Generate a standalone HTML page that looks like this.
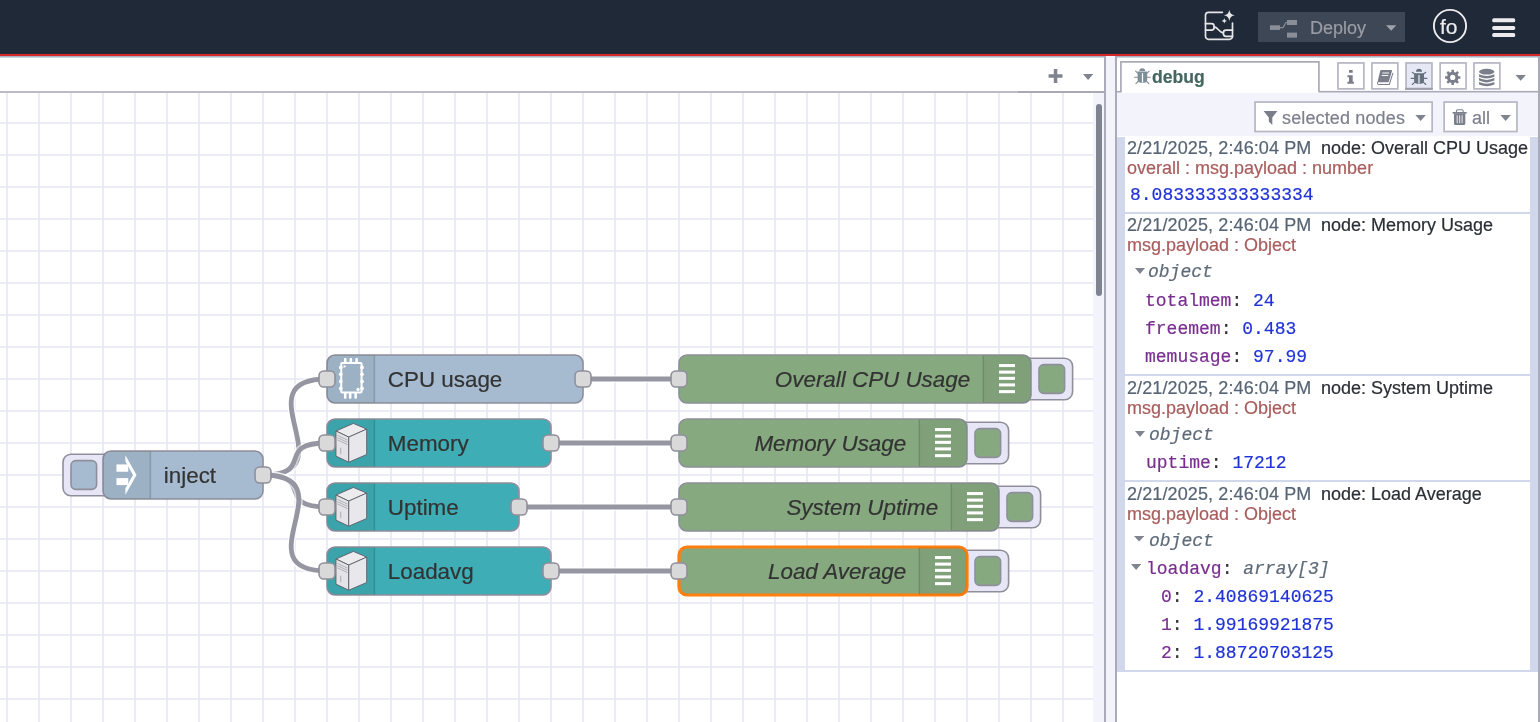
<!DOCTYPE html>
<html><head><meta charset="utf-8"><title>Node-RED</title>
<style>
html,body{margin:0;padding:0;width:1540px;height:722px;overflow:hidden;background:#fff;font-family:"Liberation Sans", sans-serif;}
body>div,body>svg{will-change:transform;}
body>div{-webkit-text-stroke:0.2px currentColor;}
</style></head><body>
<div style="position:absolute;left:0;top:0;width:1540px;height:54px;background:#1f2937"></div><div style="position:absolute;left:0;top:54px;width:1540px;height:2px;background:#d62828"></div><svg style="position:absolute;left:1195px;top:5px" width="50" height="45" viewBox="1195 5 50 45"><g fill="none" stroke="#e6e6e8" stroke-width="1.7" stroke-linecap="round"><path d="M1222.4 12.3 H1208.5 a3 3 0 0 0 -3 3 V36.3 a3 3 0 0 0 3 3 H1229.5 a3 3 0 0 0 3 -3 V23"/><path d="M1205.5 23.7 H1211.5 a2.6 2.6 0 0 1 2.6 2.6 v1.2 a2.6 2.6 0 0 1 -2.6 2.6 H1205.5"/><path d="M1232.5 30.2 H1226 a2.6 2.6 0 0 0 -2.6 2.6 v1 a2.6 2.6 0 0 0 2.6 2.6 H1232.5"/><path d="M1214.1 26.9 C1218 26.9 1219 32.8 1223.4 32.8"/></g><path d="M1229.3 9.7 Q1229.9 14.7 1234.9 15.3 Q1229.9 15.9 1229.3 20.9 Q1228.7 15.9 1223.7 15.3 Q1228.7 14.7 1229.3 9.7Z" fill="#e6e6e8"/><path d="M1224.3 18.3 Q1224.6 20.6 1226.9 20.9 Q1224.6 21.2 1224.3 23.5 Q1224 21.2 1221.7 20.9 Q1224 20.6 1224.3 18.3Z" fill="#e6e6e8"/></svg><div style="position:absolute;left:1258px;top:12px;width:147px;height:30px;background:#3d4756"></div><svg style="position:absolute;left:1258px;top:12px" width="147" height="30" viewBox="1258 12 147 30"><rect x="1270" y="25.3" width="10" height="4.6" fill="#8a8e98"/><rect x="1287" y="20" width="10" height="5" fill="#8a8e98"/><rect x="1287" y="32.6" width="10" height="5" fill="#8a8e98"/><path d="M1280 27.6 L1283 27.6 L1286 22.5 L1287 22.5" stroke="#8a8e98" stroke-width="1.2" fill="none"/><polygon points="1386,25.3 1396.3,25.3 1391.15,30.8" fill="#a0a3ab"/></svg><div style="position:absolute;left:1310.3px;top:17.66px;font-family:'Liberation Sans', sans-serif;font-size:18px;line-height:20px;color:#9a9da5;white-space:pre;">Deploy</div><svg style="position:absolute;left:1430px;top:6px" width="40" height="40"><circle cx="20" cy="20" r="16.1" fill="none" stroke="#ececee" stroke-width="1.9"/></svg><div style="position:absolute;left:1440.2px;top:16.62px;font-family:'Liberation Sans', sans-serif;font-size:21px;line-height:20px;color:#ececee;white-space:pre;">fo</div><svg style="position:absolute;left:1490px;top:15px" width="28" height="26"><rect x="2.2" y="3.3" width="23" height="4" rx="1.6" fill="#ececee"/><rect x="2.2" y="10.9" width="23" height="4" rx="1.6" fill="#ececee"/><rect x="2.2" y="18.1" width="23" height="4" rx="1.6" fill="#ececee"/></svg>
<div style="position:absolute;left:0;top:56px;width:1104px;height:1px;background:#a9b3bf"></div><div style="position:absolute;left:0;top:57px;width:1104px;height:1px;background:#cdd3db"></div><div style="position:absolute;left:0;top:58px;width:1104px;height:33px;background:#fff"></div><div style="position:absolute;left:0;top:91px;width:1018px;height:2px;background:#bbbbc7"></div><div style="position:absolute;left:1018px;top:91px;width:86px;height:2px;background:#a8a8b6"></div><svg style="position:absolute;left:1046px;top:67px" width="20" height="18"><path d="M9.55 2 V16 M2.6 9 H16.5" stroke="#80848f" stroke-width="3.5" stroke-linecap="butt"/></svg><svg style="position:absolute;left:1082.6px;top:74px" width="10.2" height="6"><polygon points="0,0 10.2,0 5.1,6" fill="#80848f"/></svg><div style="position:absolute;left:1093px;top:93px;width:11px;height:629px;background:#f3f3fb"></div><div style="position:absolute;left:1096px;top:104px;width:6px;height:192px;background:#7f8491;border-radius:3px"></div><div style="position:absolute;left:1104px;top:56px;width:2px;height:666px;background:#aaaab8"></div><div style="position:absolute;left:1106px;top:56px;width:9px;height:666px;background:#f3f3fb"></div><div style="position:absolute;left:1115px;top:56px;width:2px;height:666px;background:#aaaab8"></div>
<div style="position:absolute;left:0;top:93px;width:1093px;height:629px;background:#fff;overflow:hidden"><svg width="1093" height="629" style="position:absolute;left:0;top:0"><g transform="translate(7.0,-66.0) scale(1.6)" font-family="Liberation Sans, sans-serif"><g stroke="#e6e6f5" stroke-width="1" shape-rendering="auto"><line x1="-20" y1="0" x2="-20" y2="500"/><line x1="0" y1="0" x2="0" y2="500"/><line x1="20" y1="0" x2="20" y2="500"/><line x1="40" y1="0" x2="40" y2="500"/><line x1="60" y1="0" x2="60" y2="500"/><line x1="80" y1="0" x2="80" y2="500"/><line x1="100" y1="0" x2="100" y2="500"/><line x1="120" y1="0" x2="120" y2="500"/><line x1="140" y1="0" x2="140" y2="500"/><line x1="160" y1="0" x2="160" y2="500"/><line x1="180" y1="0" x2="180" y2="500"/><line x1="200" y1="0" x2="200" y2="500"/><line x1="220" y1="0" x2="220" y2="500"/><line x1="240" y1="0" x2="240" y2="500"/><line x1="260" y1="0" x2="260" y2="500"/><line x1="280" y1="0" x2="280" y2="500"/><line x1="300" y1="0" x2="300" y2="500"/><line x1="320" y1="0" x2="320" y2="500"/><line x1="340" y1="0" x2="340" y2="500"/><line x1="360" y1="0" x2="360" y2="500"/><line x1="380" y1="0" x2="380" y2="500"/><line x1="400" y1="0" x2="400" y2="500"/><line x1="420" y1="0" x2="420" y2="500"/><line x1="440" y1="0" x2="440" y2="500"/><line x1="460" y1="0" x2="460" y2="500"/><line x1="480" y1="0" x2="480" y2="500"/><line x1="500" y1="0" x2="500" y2="500"/><line x1="520" y1="0" x2="520" y2="500"/><line x1="540" y1="0" x2="540" y2="500"/><line x1="560" y1="0" x2="560" y2="500"/><line x1="580" y1="0" x2="580" y2="500"/><line x1="600" y1="0" x2="600" y2="500"/><line x1="620" y1="0" x2="620" y2="500"/><line x1="640" y1="0" x2="640" y2="500"/><line x1="660" y1="0" x2="660" y2="500"/><line x1="680" y1="0" x2="680" y2="500"/><line x1="700" y1="0" x2="700" y2="500"/><line x1="720" y1="0" x2="720" y2="500"/><line x1="740" y1="0" x2="740" y2="500"/><line x1="760" y1="0" x2="760" y2="500"/><line x1="780" y1="0" x2="780" y2="500"/><line x1="-10" y1="40" x2="700" y2="40"/><line x1="-10" y1="60" x2="700" y2="60"/><line x1="-10" y1="80" x2="700" y2="80"/><line x1="-10" y1="100" x2="700" y2="100"/><line x1="-10" y1="120" x2="700" y2="120"/><line x1="-10" y1="140" x2="700" y2="140"/><line x1="-10" y1="160" x2="700" y2="160"/><line x1="-10" y1="180" x2="700" y2="180"/><line x1="-10" y1="200" x2="700" y2="200"/><line x1="-10" y1="220" x2="700" y2="220"/><line x1="-10" y1="240" x2="700" y2="240"/><line x1="-10" y1="260" x2="700" y2="260"/><line x1="-10" y1="280" x2="700" y2="280"/><line x1="-10" y1="300" x2="700" y2="300"/><line x1="-10" y1="320" x2="700" y2="320"/><line x1="-10" y1="340" x2="700" y2="340"/><line x1="-10" y1="360" x2="700" y2="360"/><line x1="-10" y1="380" x2="700" y2="380"/><line x1="-10" y1="400" x2="700" y2="400"/><line x1="-10" y1="420" x2="700" y2="420"/><line x1="-10" y1="440" x2="700" y2="440"/><line x1="-10" y1="460" x2="700" y2="460"/><line x1="-10" y1="480" x2="700" y2="480"/></g><path d="M 160.0 280 C 214.08326913195984 280 145.91673086804016 220 200.0 220" fill="none" stroke="#fff" stroke-width="5" stroke-opacity="0.6"/><path d="M 160.0 280 C 214.08326913195984 280 145.91673086804016 220 200.0 220" fill="none" stroke="#9696a2" stroke-width="3"/><path d="M 160.0 280 C 193.54101966249686 280 166.45898033750314 260 200.0 260" fill="none" stroke="#fff" stroke-width="5" stroke-opacity="0.6"/><path d="M 160.0 280 C 193.54101966249686 280 166.45898033750314 260 200.0 260" fill="none" stroke="#9696a2" stroke-width="3"/><path d="M 160.0 280 C 193.54101966249686 280 166.45898033750314 300 200.0 300" fill="none" stroke="#fff" stroke-width="5" stroke-opacity="0.6"/><path d="M 160.0 280 C 193.54101966249686 280 166.45898033750314 300 200.0 300" fill="none" stroke="#9696a2" stroke-width="3"/><path d="M 160.0 280 C 214.08326913195984 280 145.91673086804016 340 200.0 340" fill="none" stroke="#fff" stroke-width="5" stroke-opacity="0.6"/><path d="M 160.0 280 C 214.08326913195984 280 145.91673086804016 340 200.0 340" fill="none" stroke="#9696a2" stroke-width="3"/><path d="M 360.0 220 C 405.0 220 375.0 220 420.0 220" fill="none" stroke="#fff" stroke-width="5" stroke-opacity="0.6"/><path d="M 360.0 220 C 405.0 220 375.0 220 420.0 220" fill="none" stroke="#9696a2" stroke-width="3"/><path d="M 340.0 260 C 400.0 260 360.0 260 420.0 260" fill="none" stroke="#fff" stroke-width="5" stroke-opacity="0.6"/><path d="M 340.0 260 C 400.0 260 360.0 260 420.0 260" fill="none" stroke="#9696a2" stroke-width="3"/><path d="M 320.0 300 C 395.0 300 345.0 300 420.0 300" fill="none" stroke="#fff" stroke-width="5" stroke-opacity="0.6"/><path d="M 320.0 300 C 395.0 300 345.0 300 420.0 300" fill="none" stroke="#9696a2" stroke-width="3"/><path d="M 340.0 340 C 400.0 340 360.0 340 420.0 340" fill="none" stroke="#fff" stroke-width="5" stroke-opacity="0.6"/><path d="M 340.0 340 C 400.0 340 360.0 340 420.0 340" fill="none" stroke="#9696a2" stroke-width="3"/><g transform="translate(60.0,265.0)"><g transform="translate(-25,2)"><rect width="32" height="26" rx="5" ry="5" fill="#e6e6f6" stroke="#8f8f9b" stroke-width="1"/><rect x="5" y="4" width="16" height="18" rx="3" ry="3" fill="#a6bbcf" stroke="#8f8f9b" stroke-width="1"/></g><rect width="100" height="30" rx="5" ry="5" fill="#a6bbcf" stroke="#8f8f9b" stroke-width="1"/><path d="M5 0 h25 v30 h-25 a5 5 0 0 1 -5 -5 v-20 a5 5 0 0 1 5 -5z" fill="#000" fill-opacity="0.05"/><path d="M29.6 0.5 l0 29" stroke="#000" stroke-opacity="0.13" stroke-width="1"/><g><polygon points="13.99,2.61 20.95,14.96 13.99,27.3 13.99,23.42 18.76,14.96 13.99,6.49" fill="#fff"/><rect x="8.41" y="8.39" width="7.37" height="4.58" fill="#fff"/><rect x="8.41" y="16.94" width="7.37" height="4.39" fill="#fff"/></g><text x="38" y="15" dy=".35em" text-anchor="start" style="" font-size="14" fill="#333" stroke="#333" stroke-width="0.13">inject</text><rect x="95" y="10" width="10" height="10" rx="3" ry="3" fill="#d9d9d9" stroke="#8f8f9b" stroke-width="1"/></g><g transform="translate(200.0,205.0)"><rect width="160" height="30" rx="5" ry="5" fill="#a6bbcf" stroke="#8f8f9b" stroke-width="1"/><path d="M5 0 h25 v30 h-25 a5 5 0 0 1 -5 -5 v-20 a5 5 0 0 1 5 -5z" fill="#000" fill-opacity="0.05"/><path d="M29.6 0.5 l0 29" stroke="#000" stroke-opacity="0.13" stroke-width="1"/><g><g fill="none" stroke="#fff" stroke-width="1.25"><rect x="8.9" y="5.0" width="12.7" height="18.5" rx="0.5"/></g><g fill="#fff"><circle cx="8.6" cy="7.75" r="1.15"/><circle cx="21.9" cy="7.75" r="1.15"/><circle cx="8.6" cy="12.1" r="1.15"/><circle cx="21.9" cy="12.1" r="1.15"/><circle cx="8.6" cy="16.5" r="1.15"/><circle cx="21.9" cy="16.5" r="1.15"/><circle cx="8.6" cy="20.9" r="1.15"/><circle cx="21.9" cy="20.9" r="1.15"/><rect x="10.6" y="1.9" width="1.6" height="3.2" rx="0.5"/><rect x="14.1" y="1.9" width="1.6" height="3.2" rx="0.5"/><rect x="17.7" y="1.9" width="1.6" height="3.2" rx="0.5"/><rect x="10.6" y="23.5" width="1.6" height="3.8" rx="0.5"/><rect x="13.7" y="23.5" width="1.6" height="3.8" rx="0.5"/><rect x="17.099999999999998" y="23.5" width="1.6" height="3.8" rx="0.5"/><polygon points="10.4,6.2 12.2,7.1 10.4,8.2"/><circle cx="19.4" cy="21.5" r="1.0"/></g></g><text x="38" y="15" dy=".35em" text-anchor="start" style="" font-size="14" fill="#333" stroke="#333" stroke-width="0.13">CPU usage</text><rect x="-5" y="10" width="10" height="10" rx="3" ry="3" fill="#d9d9d9" stroke="#8f8f9b" stroke-width="1"/><rect x="155" y="10" width="10" height="10" rx="3" ry="3" fill="#d9d9d9" stroke="#8f8f9b" stroke-width="1"/></g><g transform="translate(200.0,245.0)"><rect width="140" height="30" rx="5" ry="5" fill="#3fadb5" stroke="#8f8f9b" stroke-width="1"/><path d="M5 0 h25 v30 h-25 a5 5 0 0 1 -5 -5 v-20 a5 5 0 0 1 5 -5z" fill="#000" fill-opacity="0.05"/><path d="M29.6 0.5 l0 29" stroke="#000" stroke-opacity="0.13" stroke-width="1"/><g><g stroke="#5b5b66" stroke-width="0.55" stroke-linejoin="round"><polygon points="5.6,7.5 16.5,2.75 24.8,6.3 13.6,11.3" fill="#ececef"/><polygon points="5.6,7.5 13.6,11.3 13.6,27 5.6,23.2" fill="#e4e4e8"/><polygon points="13.6,11.3 24.8,6.3 24.8,22.2 13.6,27" fill="#e8e8ec"/></g><path d="M6.5 10.2 L12.8 13.2 M6.5 11.6 L12.8 14.6 M6.5 13 L12.8 16" stroke="#9a9aa3" stroke-width="0.45"/><path d="M8.6 18 L8.6 22" stroke="#9a9aa3" stroke-width="0.5"/></g><text x="38" y="15" dy=".35em" text-anchor="start" style="" font-size="14" fill="#333" stroke="#333" stroke-width="0.13">Memory</text><rect x="-5" y="10" width="10" height="10" rx="3" ry="3" fill="#d9d9d9" stroke="#8f8f9b" stroke-width="1"/><rect x="135" y="10" width="10" height="10" rx="3" ry="3" fill="#d9d9d9" stroke="#8f8f9b" stroke-width="1"/></g><g transform="translate(200.0,285.0)"><rect width="120" height="30" rx="5" ry="5" fill="#3fadb5" stroke="#8f8f9b" stroke-width="1"/><path d="M5 0 h25 v30 h-25 a5 5 0 0 1 -5 -5 v-20 a5 5 0 0 1 5 -5z" fill="#000" fill-opacity="0.05"/><path d="M29.6 0.5 l0 29" stroke="#000" stroke-opacity="0.13" stroke-width="1"/><g><g stroke="#5b5b66" stroke-width="0.55" stroke-linejoin="round"><polygon points="5.6,7.5 16.5,2.75 24.8,6.3 13.6,11.3" fill="#ececef"/><polygon points="5.6,7.5 13.6,11.3 13.6,27 5.6,23.2" fill="#e4e4e8"/><polygon points="13.6,11.3 24.8,6.3 24.8,22.2 13.6,27" fill="#e8e8ec"/></g><path d="M6.5 10.2 L12.8 13.2 M6.5 11.6 L12.8 14.6 M6.5 13 L12.8 16" stroke="#9a9aa3" stroke-width="0.45"/><path d="M8.6 18 L8.6 22" stroke="#9a9aa3" stroke-width="0.5"/></g><text x="38" y="15" dy=".35em" text-anchor="start" style="" font-size="14" fill="#333" stroke="#333" stroke-width="0.13">Uptime</text><rect x="-5" y="10" width="10" height="10" rx="3" ry="3" fill="#d9d9d9" stroke="#8f8f9b" stroke-width="1"/><rect x="115" y="10" width="10" height="10" rx="3" ry="3" fill="#d9d9d9" stroke="#8f8f9b" stroke-width="1"/></g><g transform="translate(200.0,325.0)"><rect width="140" height="30" rx="5" ry="5" fill="#3fadb5" stroke="#8f8f9b" stroke-width="1"/><path d="M5 0 h25 v30 h-25 a5 5 0 0 1 -5 -5 v-20 a5 5 0 0 1 5 -5z" fill="#000" fill-opacity="0.05"/><path d="M29.6 0.5 l0 29" stroke="#000" stroke-opacity="0.13" stroke-width="1"/><g><g stroke="#5b5b66" stroke-width="0.55" stroke-linejoin="round"><polygon points="5.6,7.5 16.5,2.75 24.8,6.3 13.6,11.3" fill="#ececef"/><polygon points="5.6,7.5 13.6,11.3 13.6,27 5.6,23.2" fill="#e4e4e8"/><polygon points="13.6,11.3 24.8,6.3 24.8,22.2 13.6,27" fill="#e8e8ec"/></g><path d="M6.5 10.2 L12.8 13.2 M6.5 11.6 L12.8 14.6 M6.5 13 L12.8 16" stroke="#9a9aa3" stroke-width="0.45"/><path d="M8.6 18 L8.6 22" stroke="#9a9aa3" stroke-width="0.5"/></g><text x="38" y="15" dy=".35em" text-anchor="start" style="" font-size="14" fill="#333" stroke="#333" stroke-width="0.13">Loadavg</text><rect x="-5" y="10" width="10" height="10" rx="3" ry="3" fill="#d9d9d9" stroke="#8f8f9b" stroke-width="1"/><rect x="135" y="10" width="10" height="10" rx="3" ry="3" fill="#d9d9d9" stroke="#8f8f9b" stroke-width="1"/></g><g transform="translate(420.0,205.0)"><g transform="translate(213,2)"><rect width="33" height="26" rx="5" ry="5" fill="#e6e6f6" stroke="#8f8f9b" stroke-width="1"/><rect x="12" y="4" width="16" height="18" rx="3" ry="3" fill="#87a980" stroke="#8f8f9b" stroke-width="1"/></g><rect width="220" height="30" rx="5" ry="5" fill="#87a980" stroke="#8f8f9b" stroke-width="1"/><g transform="translate(190,0)"><path d="M0 0 h25 a5 5 0 0 1 5 5 v20 a5 5 0 0 1 -5 5 h-25z" fill="#000" fill-opacity="0.05"/><path d="M0.2 0.5 l0 29" stroke="#000" stroke-opacity="0.13" stroke-width="1"/><rect x="10" y="5.6499999999999995" width="10" height="1.9" fill="#fff"/><rect x="10" y="9.75" width="10" height="1.9" fill="#fff"/><rect x="10" y="13.65" width="10" height="1.9" fill="#fff"/><rect x="10" y="17.75" width="10" height="1.9" fill="#fff"/><rect x="10" y="21.95" width="10" height="1.9" fill="#fff"/></g><text x="182" y="15" dy=".35em" text-anchor="end" style="font-style:italic;" font-size="14" fill="#333" stroke="#333" stroke-width="0.13">Overall CPU Usage</text><rect x="-5" y="10" width="10" height="10" rx="3" ry="3" fill="#d9d9d9" stroke="#8f8f9b" stroke-width="1"/></g><g transform="translate(420.0,245.0)"><g transform="translate(173,2)"><rect width="33" height="26" rx="5" ry="5" fill="#e6e6f6" stroke="#8f8f9b" stroke-width="1"/><rect x="12" y="4" width="16" height="18" rx="3" ry="3" fill="#87a980" stroke="#8f8f9b" stroke-width="1"/></g><rect width="180" height="30" rx="5" ry="5" fill="#87a980" stroke="#8f8f9b" stroke-width="1"/><g transform="translate(150,0)"><path d="M0 0 h25 a5 5 0 0 1 5 5 v20 a5 5 0 0 1 -5 5 h-25z" fill="#000" fill-opacity="0.05"/><path d="M0.2 0.5 l0 29" stroke="#000" stroke-opacity="0.13" stroke-width="1"/><rect x="10" y="5.6499999999999995" width="10" height="1.9" fill="#fff"/><rect x="10" y="9.75" width="10" height="1.9" fill="#fff"/><rect x="10" y="13.65" width="10" height="1.9" fill="#fff"/><rect x="10" y="17.75" width="10" height="1.9" fill="#fff"/><rect x="10" y="21.95" width="10" height="1.9" fill="#fff"/></g><text x="142" y="15" dy=".35em" text-anchor="end" style="font-style:italic;" font-size="14" fill="#333" stroke="#333" stroke-width="0.13">Memory Usage</text><rect x="-5" y="10" width="10" height="10" rx="3" ry="3" fill="#d9d9d9" stroke="#8f8f9b" stroke-width="1"/></g><g transform="translate(420.0,285.0)"><g transform="translate(193,2)"><rect width="33" height="26" rx="5" ry="5" fill="#e6e6f6" stroke="#8f8f9b" stroke-width="1"/><rect x="12" y="4" width="16" height="18" rx="3" ry="3" fill="#87a980" stroke="#8f8f9b" stroke-width="1"/></g><rect width="200" height="30" rx="5" ry="5" fill="#87a980" stroke="#8f8f9b" stroke-width="1"/><g transform="translate(170,0)"><path d="M0 0 h25 a5 5 0 0 1 5 5 v20 a5 5 0 0 1 -5 5 h-25z" fill="#000" fill-opacity="0.05"/><path d="M0.2 0.5 l0 29" stroke="#000" stroke-opacity="0.13" stroke-width="1"/><rect x="10" y="5.6499999999999995" width="10" height="1.9" fill="#fff"/><rect x="10" y="9.75" width="10" height="1.9" fill="#fff"/><rect x="10" y="13.65" width="10" height="1.9" fill="#fff"/><rect x="10" y="17.75" width="10" height="1.9" fill="#fff"/><rect x="10" y="21.95" width="10" height="1.9" fill="#fff"/></g><text x="162" y="15" dy=".35em" text-anchor="end" style="font-style:italic;" font-size="14" fill="#333" stroke="#333" stroke-width="0.13">System Uptime</text><rect x="-5" y="10" width="10" height="10" rx="3" ry="3" fill="#d9d9d9" stroke="#8f8f9b" stroke-width="1"/></g><g transform="translate(420.0,325.0)"><g transform="translate(173,2)"><rect width="33" height="26" rx="5" ry="5" fill="#e6e6f6" stroke="#8f8f9b" stroke-width="1"/><rect x="12" y="4" width="16" height="18" rx="3" ry="3" fill="#87a980" stroke="#8f8f9b" stroke-width="1"/></g><rect width="180" height="30" rx="5" ry="5" fill="#87a980" stroke="#ff7f0e" stroke-width="2"/><g transform="translate(150,0)"><path d="M0 0 h25 a5 5 0 0 1 5 5 v20 a5 5 0 0 1 -5 5 h-25z" fill="#000" fill-opacity="0.05"/><path d="M0.2 0.5 l0 29" stroke="#000" stroke-opacity="0.13" stroke-width="1"/><rect x="10" y="5.6499999999999995" width="10" height="1.9" fill="#fff"/><rect x="10" y="9.75" width="10" height="1.9" fill="#fff"/><rect x="10" y="13.65" width="10" height="1.9" fill="#fff"/><rect x="10" y="17.75" width="10" height="1.9" fill="#fff"/><rect x="10" y="21.95" width="10" height="1.9" fill="#fff"/></g><text x="142" y="15" dy=".35em" text-anchor="end" style="font-style:italic;" font-size="14" fill="#333" stroke="#333" stroke-width="0.13">Load Average</text><rect x="-5" y="10" width="10" height="10" rx="3" ry="3" fill="#d9d9d9" stroke="#8f8f9b" stroke-width="1"/></g></g></svg></div>
<div style="position:absolute;left:1117px;top:56px;width:423px;height:666px;background:#fff"></div><svg style="position:absolute;left:1117px;top:56px" width="423" height="666" viewBox="1117 56 423 666"><rect x="1117" y="56" width="423" height="1" fill="#a9b3bf"/><rect x="1117" y="57" width="423" height="1" fill="#cdd3db"/><rect x="1117" y="92" width="421" height="44" fill="#f3f3fb"/><rect x="1117" y="90.9" width="421" height="1.6" fill="#aaaab8"/><rect x="1121.7" y="62" width="197" height="31" fill="#fff"/><path d="M1120.9 91.7 V61.9 H1318.9 V91.7" fill="none" stroke="#aaaab8" stroke-width="1.7"/><rect x="1538" y="56" width="2" height="666" fill="#aaaab8"/><rect x="1337.9499999999998" y="62.95" width="25.9" height="25.9" fill="#fff" stroke="#b6b6c4" stroke-width="1.7"/><rect x="1371.9499999999998" y="62.95" width="25.9" height="25.9" fill="#fff" stroke="#b6b6c4" stroke-width="1.7"/><rect x="1406.05" y="62.95" width="25.9" height="25.9" fill="#e6e8f6" stroke="#b6b6c4" stroke-width="1.7"/><rect x="1405.2" y="87.8" width="27.6" height="2" fill="#9c9cab"/><rect x="1440.1499999999999" y="62.95" width="25.9" height="25.9" fill="#fff" stroke="#b6b6c4" stroke-width="1.7"/><rect x="1473.9499999999998" y="62.95" width="25.9" height="25.9" fill="#fff" stroke="#b6b6c4" stroke-width="1.7"/><g fill="#7a7e8a"><rect x="1349" y="70" width="3.7" height="2.8" rx="0.3"/><path d="M1347.4 75.3 H1352.7 V81.8 H1353.9 V83.8 H1347.4 V81.8 H1349 V77.2 H1347.4Z"/></g><path d="M1381 70.1 H1391.2 a0.8 0.8 0 0 1 0.8 1 L1388.8 81.6 a0.8 0.8 0 0 1 -0.8 0.6 H1378.4 a0.7 0.7 0 0 1 -0.7 -0.9 L1380.2 70.8 a0.8 0.8 0 0 1 0.8 -0.7z" fill="#7a7e8a"/><path d="M1377.6 82.4 Q1377.2 84.5 1379 84.5 H1389.3 L1392.9 73.2" fill="none" stroke="#7a7e8a" stroke-width="1.05" stroke-linecap="round"/><path d="M1382.4 73 H1389 M1381.7 75.5 H1388.3" stroke="#fff" stroke-width="0.95"/><g fill="#66717f"><path d="M1416 71.8 a3 3.1 0 0 1 6 0z"/><path d="M1414.1 73.2 H1424 V80.2 a3.5 3.5 0 0 1 -3.5 3.5 H1417.6 a3.5 3.5 0 0 1 -3.5 -3.5Z"/></g><rect x="1418.3" y="75" width="1.4" height="8.4" fill="#dfe1ee"/><g stroke="#66717f" stroke-width="1.15" stroke-linecap="round"><path d="M1412.3 72.3 L1414.6 74 M1425.8 72.3 L1423.5 74 M1411.1 78.3 H1414.1 M1427 78.3 H1424 M1412.3 84.5 L1414.6 82.3 M1425.8 84.5 L1423.5 82.3"/></g><g transform="translate(1452.7,77.4)" fill="#7a7e8a"><circle r="5.7"/><rect x="-1.25" y="-7.7" width="2.5" height="4" rx="0.4" transform="rotate(0)"/><rect x="-1.25" y="-7.7" width="2.5" height="4" rx="0.4" transform="rotate(45)"/><rect x="-1.25" y="-7.7" width="2.5" height="4" rx="0.4" transform="rotate(90)"/><rect x="-1.25" y="-7.7" width="2.5" height="4" rx="0.4" transform="rotate(135)"/><rect x="-1.25" y="-7.7" width="2.5" height="4" rx="0.4" transform="rotate(180)"/><rect x="-1.25" y="-7.7" width="2.5" height="4" rx="0.4" transform="rotate(225)"/><rect x="-1.25" y="-7.7" width="2.5" height="4" rx="0.4" transform="rotate(270)"/><rect x="-1.25" y="-7.7" width="2.5" height="4" rx="0.4" transform="rotate(315)"/></g><circle cx="1452.7" cy="77.4" r="2.6" fill="#fff"/><g fill="#7a7e8a"><ellipse cx="1486.7" cy="71.7" rx="7.7" ry="2.9"/><path d="M1479 74.3 Q1486.7 77.89999999999999 1494.4 74.3 V76.8 Q1486.7 80.39999999999999 1479 76.8Z"/><path d="M1479 78.1 Q1486.7 81.69999999999999 1494.4 78.1 V80.6 Q1486.7 84.19999999999999 1479 80.6Z"/><path d="M1479 81.9 Q1486.7 85.5 1494.4 81.9 V84.4 Q1486.7 88.0 1479 84.4Z"/></g><polygon points="1515.5,75 1525.9,75 1520.7,80.8" fill="#80848f"/><rect x="1255.05" y="102.05" width="177.1" height="29.5" fill="#fff" stroke="#b6b6c4" stroke-width="1.7"/><path d="M1263.6 110.9 H1277.4 L1272.3 117.4 V124.9 L1268.8 121.6 V117.4Z" fill="#7a7e8a"/><polygon points="1415.4,115.1 1425.9,115.1 1420.65,121" fill="#80848f"/><rect x="1444.15" y="102.05" width="72.8" height="29.5" fill="#fff" stroke="#b6b6c4" stroke-width="1.7"/><path d="M1456.4 112.6 V111.3 a1.5 1.5 0 0 1 1.5 -1.5 H1461.7 a1.5 1.5 0 0 1 1.5 1.5 V112.6" fill="none" stroke="#7a7e8a" stroke-width="1.1"/><g fill="#7a7e8a"><rect x="1452.6" y="112" width="14" height="1.7"/><path d="M1454 113.5 H1465.3 V123.5 a1.6 1.6 0 0 1 -1.6 1.6 H1455.6 a1.6 1.6 0 0 1 -1.6 -1.6Z"/></g><path d="M1457.2 115.2 V123.3 M1459.65 115.2 V123.3 M1462.1 115.2 V123.3" stroke="#e4e4ea" stroke-width="1.05"/><polygon points="1500.4,115.1 1510.9,115.1 1505.65,121" fill="#80848f"/></svg><svg style="position:absolute;left:1130px;top:64px" width="24" height="24" viewBox="1130 64 24 24"><g fill="#7d8e96"><path d="M1139.3 70.9 a2.95 2.7 0 0 1 5.9 0z"/><path d="M1137.6 71.4 H1147.2 V79.6 a3.2 3.2 0 0 1 -3.2 3.2 H1140.8 a3.2 3.2 0 0 1 -3.2 -3.2Z"/></g><rect x="1141.9" y="73.2" width="1.2" height="9.2" fill="#fff"/><g stroke="#7d8e96" stroke-width="1.05" stroke-linecap="round"><path d="M1135.6 71.1 L1137.7 73.1 M1149.2 71.1 L1147.1 73.1 M1134.5 77.3 H1137.6 M1150.3 77.3 H1147.2 M1135.9 83.6 L1138.1 81.5 M1148.9 83.6 L1146.7 81.5"/></g></svg><div style="position:absolute;left:1152.2px;top:66.70px;font-family:'Liberation Sans', sans-serif;font-size:17.6px;line-height:20px;color:#456660;white-space:pre;font-weight:bold;">debug</div><div style="position:absolute;left:1282.3px;top:108.26px;font-family:'Liberation Sans', sans-serif;font-size:18px;line-height:20px;color:#7d818d;white-space:pre;letter-spacing:0.14px;">selected nodes</div><div style="position:absolute;left:1472px;top:108.26px;font-family:'Liberation Sans', sans-serif;font-size:18px;line-height:20px;color:#7d818d;white-space:pre;">all</div>
<div style="position:absolute;left:1117px;top:137px;width:421px;height:75px;background:#d2d8ec"></div><div style="position:absolute;left:1125px;top:137px;width:405px;height:75px;background:#fff"></div><div style="position:absolute;left:1117px;top:214px;width:421px;height:160px;background:#d2d8ec"></div><div style="position:absolute;left:1125px;top:214px;width:405px;height:160px;background:#fff"></div><div style="position:absolute;left:1117px;top:376px;width:421px;height:104px;background:#d2d8ec"></div><div style="position:absolute;left:1125px;top:376px;width:405px;height:104px;background:#fff"></div><div style="position:absolute;left:1117px;top:482px;width:421px;height:188px;background:#d2d8ec"></div><div style="position:absolute;left:1125px;top:482px;width:405px;height:188px;background:#fff"></div><div style="position:absolute;left:1117px;top:212px;width:421px;height:2px;background:#d2d8ec"></div><div style="position:absolute;left:1117px;top:374px;width:421px;height:2px;background:#d2d8ec"></div><div style="position:absolute;left:1117px;top:480px;width:421px;height:2px;background:#d2d8ec"></div><div style="position:absolute;left:1117px;top:670px;width:421px;height:2px;background:#d2d8ec"></div><div style="position:absolute;left:1126.5px;top:137.76px;font-family:'Liberation Sans', sans-serif;font-size:18px;line-height:20px;color:#566474;white-space:pre;letter-spacing:0.11px;">2/21/2025, 2:46:04 PM</div><div style="position:absolute;left:1320.5px;top:137.76px;font-family:'Liberation Sans', sans-serif;font-size:18px;line-height:20px;color:#2a2e35;white-space:pre;max-width:207px;overflow:hidden;">node: Overall CPU Usage</div><div style="position:absolute;left:1126.5px;top:157.76px;font-family:'Liberation Sans', sans-serif;font-size:18px;line-height:20px;color:#a85c5c;white-space:pre;">overall : msg.payload : number</div><div style="position:absolute;left:1130px;top:184.90px;font-family:'Liberation Mono', monospace;font-size:18px;line-height:20px;color:#2033d6;white-space:pre;">8.083333333333334</div><div style="position:absolute;left:1126.5px;top:215.36px;font-family:'Liberation Sans', sans-serif;font-size:18px;line-height:20px;color:#566474;white-space:pre;letter-spacing:0.11px;">2/21/2025, 2:46:04 PM</div><div style="position:absolute;left:1320.5px;top:215.36px;font-family:'Liberation Sans', sans-serif;font-size:18px;line-height:20px;color:#2a2e35;white-space:pre;max-width:207px;overflow:hidden;">node: Memory Usage</div><div style="position:absolute;left:1126.5px;top:235.26px;font-family:'Liberation Sans', sans-serif;font-size:18px;line-height:20px;color:#a85c5c;white-space:pre;">msg.payload : Object</div><svg style="position:absolute;left:1134.5px;top:268px" width="10" height="6"><polygon points="0,0 10,0 5.0,6" fill="#80848f"/></svg><div style="position:absolute;left:1148px;top:262.20px;font-family:'Liberation Mono', monospace;font-size:18px;line-height:20px;color:#5d6b78;white-space:pre;font-style:italic;">object</div><div style="position:absolute;left:1145px;top:290.95px;font-family:'Liberation Mono', monospace;font-size:18px;line-height:20px;color:#333;white-space:pre;"><span style="color:#792e90">totalmem</span>: <span style="color:#2033d6">24</span></div><div style="position:absolute;left:1145px;top:319.20px;font-family:'Liberation Mono', monospace;font-size:18px;line-height:20px;color:#333;white-space:pre;"><span style="color:#792e90">freemem</span>: <span style="color:#2033d6">0.483</span></div><div style="position:absolute;left:1145px;top:346.70px;font-family:'Liberation Mono', monospace;font-size:18px;line-height:20px;color:#333;white-space:pre;"><span style="color:#792e90">memusage</span>: <span style="color:#2033d6">97.99</span></div><div style="position:absolute;left:1126.5px;top:377.76px;font-family:'Liberation Sans', sans-serif;font-size:18px;line-height:20px;color:#566474;white-space:pre;letter-spacing:0.11px;">2/21/2025, 2:46:04 PM</div><div style="position:absolute;left:1320.5px;top:377.76px;font-family:'Liberation Sans', sans-serif;font-size:18px;line-height:20px;color:#2a2e35;white-space:pre;max-width:207px;overflow:hidden;">node: System Uptime</div><div style="position:absolute;left:1126.5px;top:397.76px;font-family:'Liberation Sans', sans-serif;font-size:18px;line-height:20px;color:#a85c5c;white-space:pre;">msg.payload : Object</div><svg style="position:absolute;left:1134.5px;top:430.5px" width="10" height="6"><polygon points="0,0 10,0 5.0,6" fill="#80848f"/></svg><div style="position:absolute;left:1148.5px;top:424.70px;font-family:'Liberation Mono', monospace;font-size:18px;line-height:20px;color:#5d6b78;white-space:pre;font-style:italic;">object</div><div style="position:absolute;left:1145.5px;top:452.70px;font-family:'Liberation Mono', monospace;font-size:18px;line-height:20px;color:#333;white-space:pre;"><span style="color:#792e90">uptime</span>: <span style="color:#2033d6">17212</span></div><div style="position:absolute;left:1126.5px;top:483.76px;font-family:'Liberation Sans', sans-serif;font-size:18px;line-height:20px;color:#566474;white-space:pre;letter-spacing:0.11px;">2/21/2025, 2:46:04 PM</div><div style="position:absolute;left:1320.5px;top:483.76px;font-family:'Liberation Sans', sans-serif;font-size:18px;line-height:20px;color:#2a2e35;white-space:pre;max-width:207px;overflow:hidden;">node: Load Average</div><div style="position:absolute;left:1126.5px;top:503.76px;font-family:'Liberation Sans', sans-serif;font-size:18px;line-height:20px;color:#a85c5c;white-space:pre;">msg.payload : Object</div><svg style="position:absolute;left:1134.3px;top:536px" width="10.2" height="5.6"><polygon points="0,0 10.2,0 5.1,5.6" fill="#80848f"/></svg><div style="position:absolute;left:1149.2px;top:530.70px;font-family:'Liberation Mono', monospace;font-size:18px;line-height:20px;color:#5d6b78;white-space:pre;font-style:italic;">object</div><svg style="position:absolute;left:1131.4px;top:564px" width="10.2" height="6"><polygon points="0,0 10.2,0 5.1,6" fill="#80848f"/></svg><div style="position:absolute;left:1146.3px;top:558.70px;font-family:'Liberation Mono', monospace;font-size:18px;line-height:20px;color:#333;white-space:pre;"><span style="color:#792e90">loadavg</span>: <span style="color:#5d6b78;font-style:italic">array[3]</span></div><div style="position:absolute;left:1161px;top:587.20px;font-family:'Liberation Mono', monospace;font-size:18px;line-height:20px;color:#333;white-space:pre;"><span style="color:#792e90">0</span>: <span style="color:#2033d6">2.40869140625</span></div><div style="position:absolute;left:1161px;top:615.20px;font-family:'Liberation Mono', monospace;font-size:18px;line-height:20px;color:#333;white-space:pre;"><span style="color:#792e90">1</span>: <span style="color:#2033d6">1.99169921875</span></div><div style="position:absolute;left:1161px;top:643.20px;font-family:'Liberation Mono', monospace;font-size:18px;line-height:20px;color:#333;white-space:pre;"><span style="color:#792e90">2</span>: <span style="color:#2033d6">1.88720703125</span></div>
</body></html>
